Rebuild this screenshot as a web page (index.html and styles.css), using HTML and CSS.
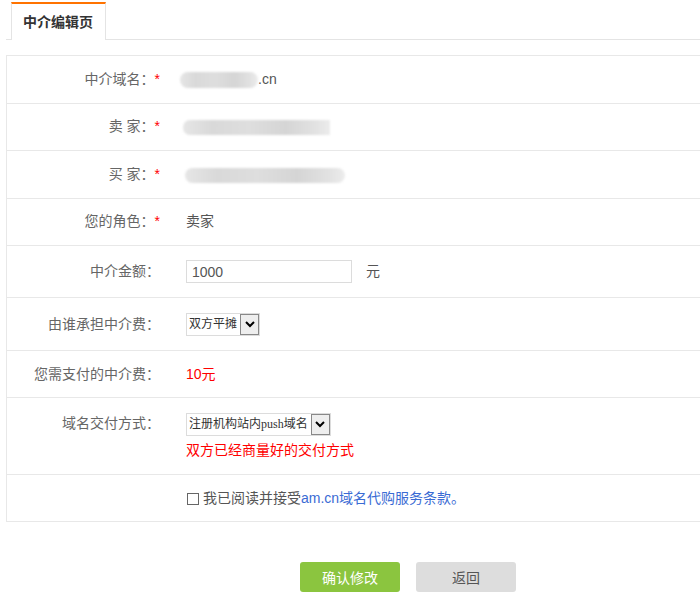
FILE: index.html
```html
<!DOCTYPE html>
<html lang="zh-CN">
<head>
  <meta charset="UTF-8" />
  <title>中介编辑页</title>
  <link rel="stylesheet" href="styles.css">
</head>
<body>
  <div class="tabs">
    <div class="tab">中介编辑页</div>
  </div>

  <div class="form">
    <div class="row">
      <div class="label">中介域名：<span class="req">*</span></div>
      <div class="value"><span class="masked masked-domain"></span>.cn</div>
    </div>
    <div class="row">
      <div class="label">卖 家：<span class="req">*</span></div>
      <div class="value"><span class="masked masked-seller"></span></div>
    </div>
    <div class="row">
      <div class="label">买 家：<span class="req">*</span></div>
      <div class="value"><span class="masked masked-buyer"></span></div>
    </div>
    <div class="row">
      <div class="label">您的角色：<span class="req">*</span></div>
      <div class="value">卖家</div>
    </div>
    <div class="row row-amount">
      <div class="label">中介金额：</div>
      <div class="value">
        <input class="amount-input" type="text" value="1000" />
        <span class="unit">元</span>
      </div>
    </div>
    <div class="row row-payer">
      <div class="label">由谁承担中介费：</div>
      <div class="value">
        <div class="select">
          <span class="select-text">双方平摊</span>
          <span class="select-arrow">
            <svg width="10" height="7" viewBox="0 0 10 7"><polyline points="1,1 5,5 9,1" fill="none" stroke="#000" stroke-width="2"/></svg>
          </span>
        </div>
      </div>
    </div>
    <div class="row row-fee">
      <div class="label">您需支付的中介费：</div>
      <div class="value fee">10元</div>
    </div>
    <div class="row row-delivery">
      <div class="label">域名交付方式：</div>
      <div class="value">
        <div class="select">
          <span class="select-text">注册机构站内push域名</span>
          <span class="select-arrow">
            <svg width="10" height="7" viewBox="0 0 10 7"><polyline points="1,1 5,5 9,1" fill="none" stroke="#000" stroke-width="2"/></svg>
          </span>
        </div>
        <div class="hint">双方已经商量好的交付方式</div>
      </div>
    </div>
    <div class="row row-agree">
      <div class="label"></div>
      <div class="value agree">
        <input class="check" type="checkbox" />
        <span>我已阅读并接受<a href="#">am.cn域名代购服务条款。</a></span>
      </div>
    </div>
  </div>

  <div class="actions">
    <button class="btn btn-ok">确认修改</button>
    <button class="btn btn-back">返回</button>
  </div>
</body>
</html>
```

FILE: styles.css
```css
body {
  margin: 0;
  font-family: "Liberation Sans", "Noto Sans CJK SC", sans-serif;
  font-size: 14px;
  color: #555;
  background: #fff;
}

/* tab bar */
.tabs {
  display: flex;
  margin: 2px 0 0 6px;
  padding-left: 5px;
  border-bottom: 1px solid #e4e4e4;
}

.tab {
  margin-bottom: -1px;
  padding: 0 12px 0 11px;
  line-height: 36px;
  border-top: 2px solid #ff7300;
  border-left: 1px solid #e4e4e4;
  border-right: 1px solid #e4e4e4;
  background: #fff;
  color: #333;
  font-weight: bold;
}

/* form (runs on past the right edge, so no right border) */
.form {
  margin: 15px 0 0 6px;
  border: 1px solid #e8e8e8;
  border-right: none;
}

.row {
  display: flex;
  align-items: center;
  height: 46.5px;
  border-top: 1px solid #e8e8e8;
}

.row:first-child {
  border-top: none;
}

.row-amount { height: 51px; }
.row-payer { height: 52px; }
.row-fee { height: 46px; }
.row-agree { height: 46px; }

.row-delivery {
  height: 77px;
  align-items: flex-start;
  padding-top: 14px;
  box-sizing: border-box;
}

.label {
  flex: none;
  width: 153px;
  text-align: right;
  color: #666;
  line-height: 23px;
}

.req {
  color: #f00;
}

.value {
  margin-left: 26px;
  line-height: 23px;
}

.masked {
  display: inline-block;
  vertical-align: middle;
  height: 16px;
  background: linear-gradient(90deg, #e6e6e6 0%, #d9d9d9 20%, #dedede 45%, #d5d5d5 70%, #e2e2e2 90%, #ececec 100%);
  filter: blur(1px);
}

.masked-domain {
  width: 78px;
  margin-left: -6px;
  border-radius: 8px;
}

.masked-seller {
  width: 147px;
  height: 15px;
  margin-left: -3px;
  border-radius: 7px 0 0 7px;
}

.masked-buyer {
  width: 160px;
  height: 15px;
  margin-left: -1px;
  border-radius: 8px;
}

.amount-input {
  box-sizing: border-box;
  width: 166px;
  height: 23px;
  padding: 0 5px;
  border: 1px solid #dcdcdc;
  font-family: "Liberation Sans", "Noto Sans CJK SC", sans-serif;
  font-size: 14px;
  color: #555;
  vertical-align: middle;
}

.unit {
  margin-left: 10px;
  vertical-align: middle;
}

.select {
  display: inline-flex;
  align-items: stretch;
  height: 23px;
  box-sizing: border-box;
  border: 1px solid #dcdcdc;
  vertical-align: middle;
}

.select-text {
  padding: 0 2px;
  font-family: "Liberation Serif", "Noto Sans CJK SC", serif;
  font-size: 12px;
  line-height: 21px;
  color: #333;
}

.select-arrow {
  display: flex;
  align-items: center;
  justify-content: center;
  width: 17px;
  margin-left: 1px;
  border: 1px solid #888;
  background: #eee;
}

.fee {
  color: #f00;
}

.hint {
  margin-top: 4px;
  line-height: 20px;
  color: #f00;
}

.agree {
  display: flex;
  align-items: center;
}

.check {
  appearance: none;
  width: 12px;
  height: 12px;
  margin: 2px 4px 0 1px;
  border: 1px solid #666;
  background: #fff;
}

.agree a {
  color: #3a6bd4;
  text-decoration: none;
}

/* buttons */
.actions {
  display: flex;
  gap: 16px;
  margin-top: 40px;
  padding-left: 300px;
}

.btn {
  width: 100px;
  height: 30px;
  border: none;
  border-radius: 3px;
  font-family: "Liberation Sans", "Noto Sans CJK SC", sans-serif;
  font-size: 14px;
  cursor: pointer;
}

.btn-ok {
  background: #8bc53f;
  color: #fff;
}

.btn-back {
  background: #ddd;
  color: #555;
}
```
